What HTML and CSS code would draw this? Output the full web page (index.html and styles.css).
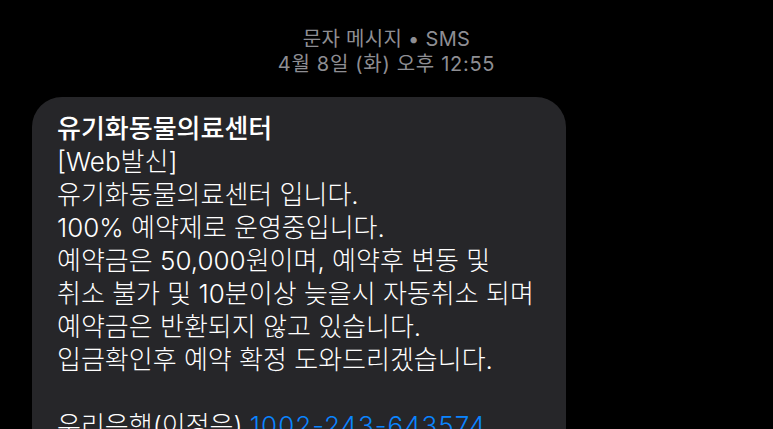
FILE: index.html
```html
<!DOCTYPE html>
<html lang="ko">
<head>
<meta charset="utf-8">
<link rel="stylesheet" href="styles.css">
</head>
<body>
<div class="screen">
  <header class="meta">
    <div class="meta-line">문자 메시지 • SMS</div>
    <div class="meta-line date">4월 8일 (화) 오후 12:55</div>
  </header>
  <div class="bubble">
    <div class="line title">유기화동물의료센터</div>
    <div class="line">[Web발신]</div>
    <div class="line">유기화동물의료센터 입니다.</div>
    <div class="line">100% 예약제로 운영중입니다.</div>
    <div class="line">예약금은 50,000원이며, 예약후 변동 및</div>
    <div class="line">취소 불가 및 10분이상 늦을시 자동취소 되며</div>
    <div class="line">예약금은 반환되지 않고 있습니다.</div>
    <div class="line">입금확인후 예약 확정 도와드리겠습니다.</div>
    <div class="line blank">&nbsp;</div>
    <div class="line">우리은행(이정은) <span class="link">1002-243-643574</span></div>
  </div>
</div>
</body>
</html>
```

FILE: styles.css
```css
html, body {
  margin: 0;
  padding: 0;
  background: #000;
  width: 773px;
  height: 429px;
  overflow: hidden;
}
.screen {
  font-family: Inter, "Noto Sans CJK KR", "Noto Sans", sans-serif;
  color: #fff;
  display: flex;
  flex-direction: column;
}
.meta {
  padding-top: 27px;
  display: flex;
  flex-direction: column;
  align-items: center;
  color: #8e8e93;
  font-size: 20px;
  line-height: 25px;
  letter-spacing: 0.3px;
}
.date {
  letter-spacing: 0.7px;
}
.bubble {
  margin: 20px 0 0 32px;
  width: 534px;
  background: #262629;
  border-radius: 30px;
  padding: 15px 20px 20px 25px;
  box-sizing: border-box;
}
.line {
  font-size: 26px;
  line-height: 33px;
  white-space: nowrap;
  font-weight: 300;
}
.title {
  font-weight: 500;
}
.link {
  color: #0a84ff;
  letter-spacing: 1px;
}
```
